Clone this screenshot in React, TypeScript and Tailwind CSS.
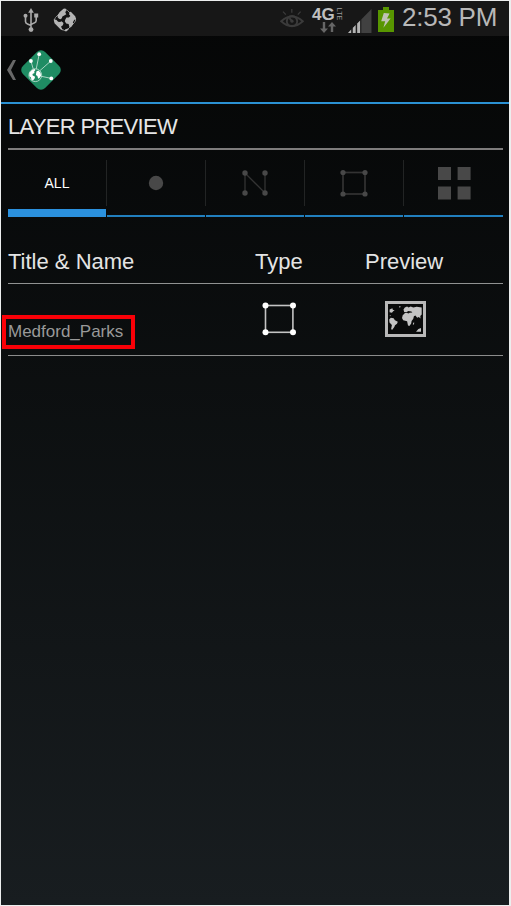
import React from "react";

function UsbIcon() {
  return (
    <svg width="16" height="25" viewBox="0 0 16 25" fill="none" stroke="#aaaaaa" strokeWidth="1.6">
      <path d="M8 4V21M2.5 9v4.5q0 1.8 2 2.4L8 17.5M13.2 8v4.5q0 1.8-2 2.4L8 16.5" />
      <path d="M8 0l2.8 4.8H5.2z" fill="#aaaaaa" stroke="none" />
      <circle cx="8" cy="21.6" r="2.4" fill="#aaaaaa" stroke="none" />
      <circle cx="2.5" cy="7.8" r="2" fill="#aaaaaa" stroke="none" />
      <path d="M11.2 5.5h4v4h-4z" fill="#aaaaaa" stroke="none" />
    </svg>
  );
}

function GlobeDiamondIcon() {
  return (
    <svg width="26" height="26" viewBox="0 0 26 26">
      <rect x="4.5" y="4.5" width="17" height="17" rx="3.5" transform="rotate(45 13 13)" fill="#141414" stroke="#909090" strokeWidth="0.9" />
      <g fill="#b4b4b4">
        <path d="M7.5 5.2l4-3.4 1.8-.2 1 1.4-1 2.6 1 1.6-2.1 1.4-1.8 1-.6 1.6-1.2 1-1.6-.4-1.4-1.6.2-2.2z" />
        <path d="M13.2 12.8l1.2-2.4 2.4.2 1.6-1.7-1.4-1.6.8-2.3 1-.2 4.4 4.4.9 2.8-2 .9-1.2 2.3.3 2.1-2 2.8-1.6.6-1-3.8-2.4-.4-1.4-2.2z" />
        <path d="M1.7 12.5l2.6.2 1.8 2 2 .2 1.4-.6 2 1.8-.6 2.2-1.8 1.2.8 2.2 1.2 1.8-2.4-1-6.2-6.2z" />
        <path d="M13 22.6l2.6-1.2 1.6.4-2.5 2.4-1.7.1z" />
      </g>
    </svg>
  );
}

function EyeIcon() {
  return (
    <svg width="24" height="20" viewBox="0 0 24 20" fill="none" stroke="#3b3b3b" strokeWidth="1.9">
      <path d="M1.2 12.2Q12 3 22.8 12.2Q12 22 1.2 12.2z" />
      <path d="M11.8 0v3.8M3 2.6l2.8 3M20.6 2.6l-2.8 3" strokeWidth="1.3" />
      <circle cx="12" cy="12.2" r="5.2" />
      <path d="M12 12.2l-2.6-3" />
      <circle cx="12" cy="12.2" r="1.6" fill="#3b3b3b" stroke="none" />
    </svg>
  );
}

function NetworkIcon() {
  return (
    <div className="relative h-[26px] w-[31px]">
      <span className="absolute -left-px -top-px font-['Liberation_Sans',sans-serif] text-[17px] font-bold leading-[17px] text-[#c0c0c0]">4G</span>
      <span className="absolute left-[19px] top-[3px] w-[14px] rotate-90 text-center text-[7px] leading-[8px] text-[#9b9b9b]">LTE</span>
      <svg className="absolute left-[7px] top-[15px]" width="16" height="12" viewBox="0 0 16 12" fill="#666">
        <path d="M2.8 0h2.4v6.4H8L4 11 0 6.4h2.8zM10.8 10h2.4V4.6H16L12 0 8 4.6h2.8z" />
      </svg>
    </div>
  );
}

function SignalIcon() {
  return (
    <svg width="24" height="24" viewBox="0 0 24 24">
      <path d="M0 24L23.5 0v24z" fill="#414141" />
      <g fill="#b4b4b4">
        <path d="M0 24l3.2-3.5V24z" />
        <path d="M4.7 19l3-3v8h-3zM9.2 14.5l3-3V24h-3z" />
      </g>
      <path d="M4 19v5M8.4 15v9M12.8 10.5V24" stroke="#191919" strokeWidth="1" />
    </svg>
  );
}

function BatteryIcon() {
  return (
    <svg width="18" height="25" viewBox="0 0 18 25">
      <path d="M6 0h6v3h5v22H1V3h5z" fill="#589600" />
      <path d="M6.8 6l5.8.4-2.6 5.1h3.6L6.4 20.8l1.8-6.5H4.2z" fill="#c0c3b5" />
    </svg>
  );
}

function AppLogo() {
  const pins = [[18.2, 4.2], [9.9, 11], [29.8, 11], [30.3, 28.4]];
  return (
    <svg width="40" height="40" viewBox="0 0 40 40">
      <rect x="4.3" y="4.3" width="31.4" height="31.4" rx="5.8" transform="rotate(45 20 20)" fill="#1f8c63" />
      <g stroke="#a8d3c1" strokeWidth="1">
        {pins.map(([x, y]) => <path key={`${x}-${y}`} d={`M14 25L${x} ${y}`} />)}
      </g>
      <g fill="#fff">
        {pins.map(([x, y]) => <circle key={`${x}-${y}`} cx={x} cy={y} r="1.9" />)}
      </g>
      <circle cx="14.3" cy="25.2" r="6.4" fill="#1f8c63" stroke="#b7dccd" strokeWidth="0.9" />
      <path d="M8.4 22.8l2-2.3 3-1.5 1.1 1-1.3 1.4.3 1.7-2 1 .2 1.4 2.4 1.3-.6 2-1.6 1.8-1.4-.6-.6-2.4-1.6-1.5zM15.4 21.6l2-1.2 2.2 2.3.5 3-1.6 2.4-1.3.6-.8-2.6-1.5-1z" fill="#fff" />
    </svg>
  );
}

function PointIcon() {
  return <svg width="16" height="16"><circle cx="8" cy="8" r="7.2" fill="#484848" /></svg>;
}

function LineIcon() {
  return (
    <svg width="26" height="28" viewBox="0 0 26 28">
      <path d="M3 24V4l20 20V4" fill="none" stroke="#333" strokeWidth="1.3" />
      <g fill="#484848"><circle cx="3" cy="4" r="2.7" /><circle cx="23" cy="4" r="2.7" /><circle cx="3" cy="24" r="2.7" /><circle cx="23" cy="24" r="2.7" /></g>
    </svg>
  );
}

function PolygonIcon({ active = false }: { active?: boolean }) {
  return active ? (
    <svg width="34" height="34" viewBox="0 0 34 34" fill="#fff">
      <rect x="3.5" y="3.5" width="27.4" height="26.8" fill="none" stroke="#c4c4c4" strokeWidth="1.6" />
      <circle cx="3.5" cy="3.5" r="3" /><circle cx="31" cy="3.5" r="3" />
      <circle cx="3.5" cy="30.3" r="3" /><circle cx="31" cy="30.3" r="3" />
    </svg>
  ) : (
    <svg width="28" height="28" viewBox="0 0 28 28" fill="#484848">
      <rect x="3" y="3.5" width="22" height="21.5" fill="none" stroke="#333" strokeWidth="1.7" />
      <circle cx="3" cy="3.5" r="2.6" /><circle cx="25" cy="3.5" r="2.6" />
      <circle cx="3" cy="25" r="2.6" /><circle cx="25" cy="25" r="2.6" />
    </svg>
  );
}

function GroupIcon() {
  return (
    <svg width="33" height="33" viewBox="0 0 33 33" fill="#484848">
      <path d="M0 0h13v13H0zM19.6 0h13v13h-13zM0 19.5h13v13H0zM19.6 19.5h13v13h-13z" />
    </svg>
  );
}

function MapIcon() {
  return (
    <svg width="41" height="36" viewBox="0 0 41 36">
      <rect x="1.5" y="1.5" width="38" height="33" fill="#0a0b0b" stroke="#b8b8b8" strokeWidth="3" />
      <g fill="#c4c4c4">
        <path d="M4.6 8.4l2.8-1.1.4 1.4 1.9.7-1.6.9-1.1 1.4-2.4-.4zM4.2 18.4l1.6-1.7 2.8.6 1.3 2 2.9 1.4-.8 2-2 1.6-.7 1.7-2 2.8-1.2-.6.8-4.2-2.4-2.4z" />
        <path d="M18.5 8.4l1.3-2 2.3-.8 1.4.8 2.2-1 2.6 1.2 3.4-.8 5 .8v7l-1.4 1.4.2 2.6-1.7-1.6-1.6.8-1.8-2.3-1.5.7-.6 2.6-1.7 2.2-.4 2.6-1.8 2.4-1.4-.4-.9-4.4-3.9-1-1.2-2.3.8-2.9 1.8-1.3z" />
        <path d="M31.2 30.5l2.2-2.5 2.6-1v3.8h-4.8zM14 5.4l1.2-.5.4 1-1 .9zM28.4 21.4l1 .4-.8 2-.8-.4zM4.5 14l1.4.5-.5.7z" />
      </g>
      <path d="M18.6 11l3.1.1 1.7-1 3 .4 1 1-2.7.2-1.3.8-1.8-.7-3 .3z" fill="#111" />
    </svg>
  );
}

function Tab({ children, active = false, last = false }: { children: React.ReactNode; active?: boolean; last?: boolean }) {
  return (
    <div className="flex w-[99px] flex-col">
      <div className={last ? "h-[46px] pl-[2px]" : "h-[46px] border-r border-[#222424]"}>
        <div className="flex h-full items-center justify-center">{children}</div>
      </div>
      <div className={active ? "mr-px mt-[3px] h-2 bg-[#2b91de]" : last ? "mt-[9px] h-[2px] bg-[#217fbe]" : "mr-px mt-[9px] h-[2px] bg-[#217fbe]"} />
    </div>
  );
}

export default function App() {
  return (
    <div className="h-[906px] w-[511px] bg-[#eceeee] px-px pt-px font-['Liberation_Sans',sans-serif]">
      <div className="flex h-[904px] w-[508px] flex-col bg-linear-to-b from-[#050606] to-[#181d20]">
        <header className="flex h-[35px] shrink-0 items-start bg-[#171717] pl-[22px]">
          <div className="mt-[7px]"><UsbIcon /></div>
          <div className="ml-[13px] mt-[6px]"><GlobeDiamondIcon /></div>
          <div className="ml-[202px] mt-[8px]"><EyeIcon /></div>
          <div className="ml-[9px] mt-[6px]"><NetworkIcon /></div>
          <div className="ml-[4px] mt-[8px]"><SignalIcon /></div>
          <div className="ml-[5px] mt-[6px]"><BatteryIcon /></div>
          <span className="ml-[7px] mt-px whitespace-nowrap text-[26px] leading-[30px] tracking-[-0.25px] text-[#b8b8b8]">2:53 PM</span>
        </header>
        <nav className="flex h-[68px] shrink-0 items-start border-b-2 border-[#2b91d3] pl-[5px] pt-[14px]">
          <svg className="mt-[10px]" width="11" height="20" viewBox="0 0 11 20">
            <path d="M7 0h3L5 10l5 10H7L1 10z" fill="#686868" />
          </svg>
          <div className="ml-[4px]"><AppLogo /></div>
        </nav>
        <main className="flex-1 pl-[7px] pr-[6px]">
          <h1 className="h-[46px] border-b-2 border-[#7e7c7c] pt-[10px] text-[22px] leading-[26px] tracking-[-0.7px] text-[#e6e6e6]">LAYER PREVIEW</h1>
          <div className="mt-[10px] flex h-[57px]">
            <Tab active><span className="text-[14px] tracking-[0.1px] text-white">ALL</span></Tab>
            <Tab><PointIcon /></Tab>
            <Tab><LineIcon /></Tab>
            <Tab><PolygonIcon /></Tab>
            <Tab last><GroupIcon /></Tab>
          </div>
          <div className="mt-[22px] grid h-[45px] grid-cols-[247px_111px_1fr] border-b border-[#909292] pt-[10px] text-[22px] leading-[26px] text-[#e4e4e4]">
            <span>Title &amp; Name</span><span>Type</span><span className="-ml-px">Preview</span>
          </div>
          <div className="grid h-[72px] grid-cols-[247px_110px_1fr] border-b border-[#8c8c8c]">
            <div className="-ml-[6px] mt-[31px] flex h-[34px] w-[133px] items-center border-4 border-[#fa0007] pl-[2px] text-[17px] text-[#999]">Medford_Parks</div>
            <div className="ml-[7px] mt-[18px]"><PolygonIcon active /></div>
            <div className="ml-[20px] mt-[17px]"><MapIcon /></div>
          </div>
        </main>
      </div>
    </div>
  );
}
